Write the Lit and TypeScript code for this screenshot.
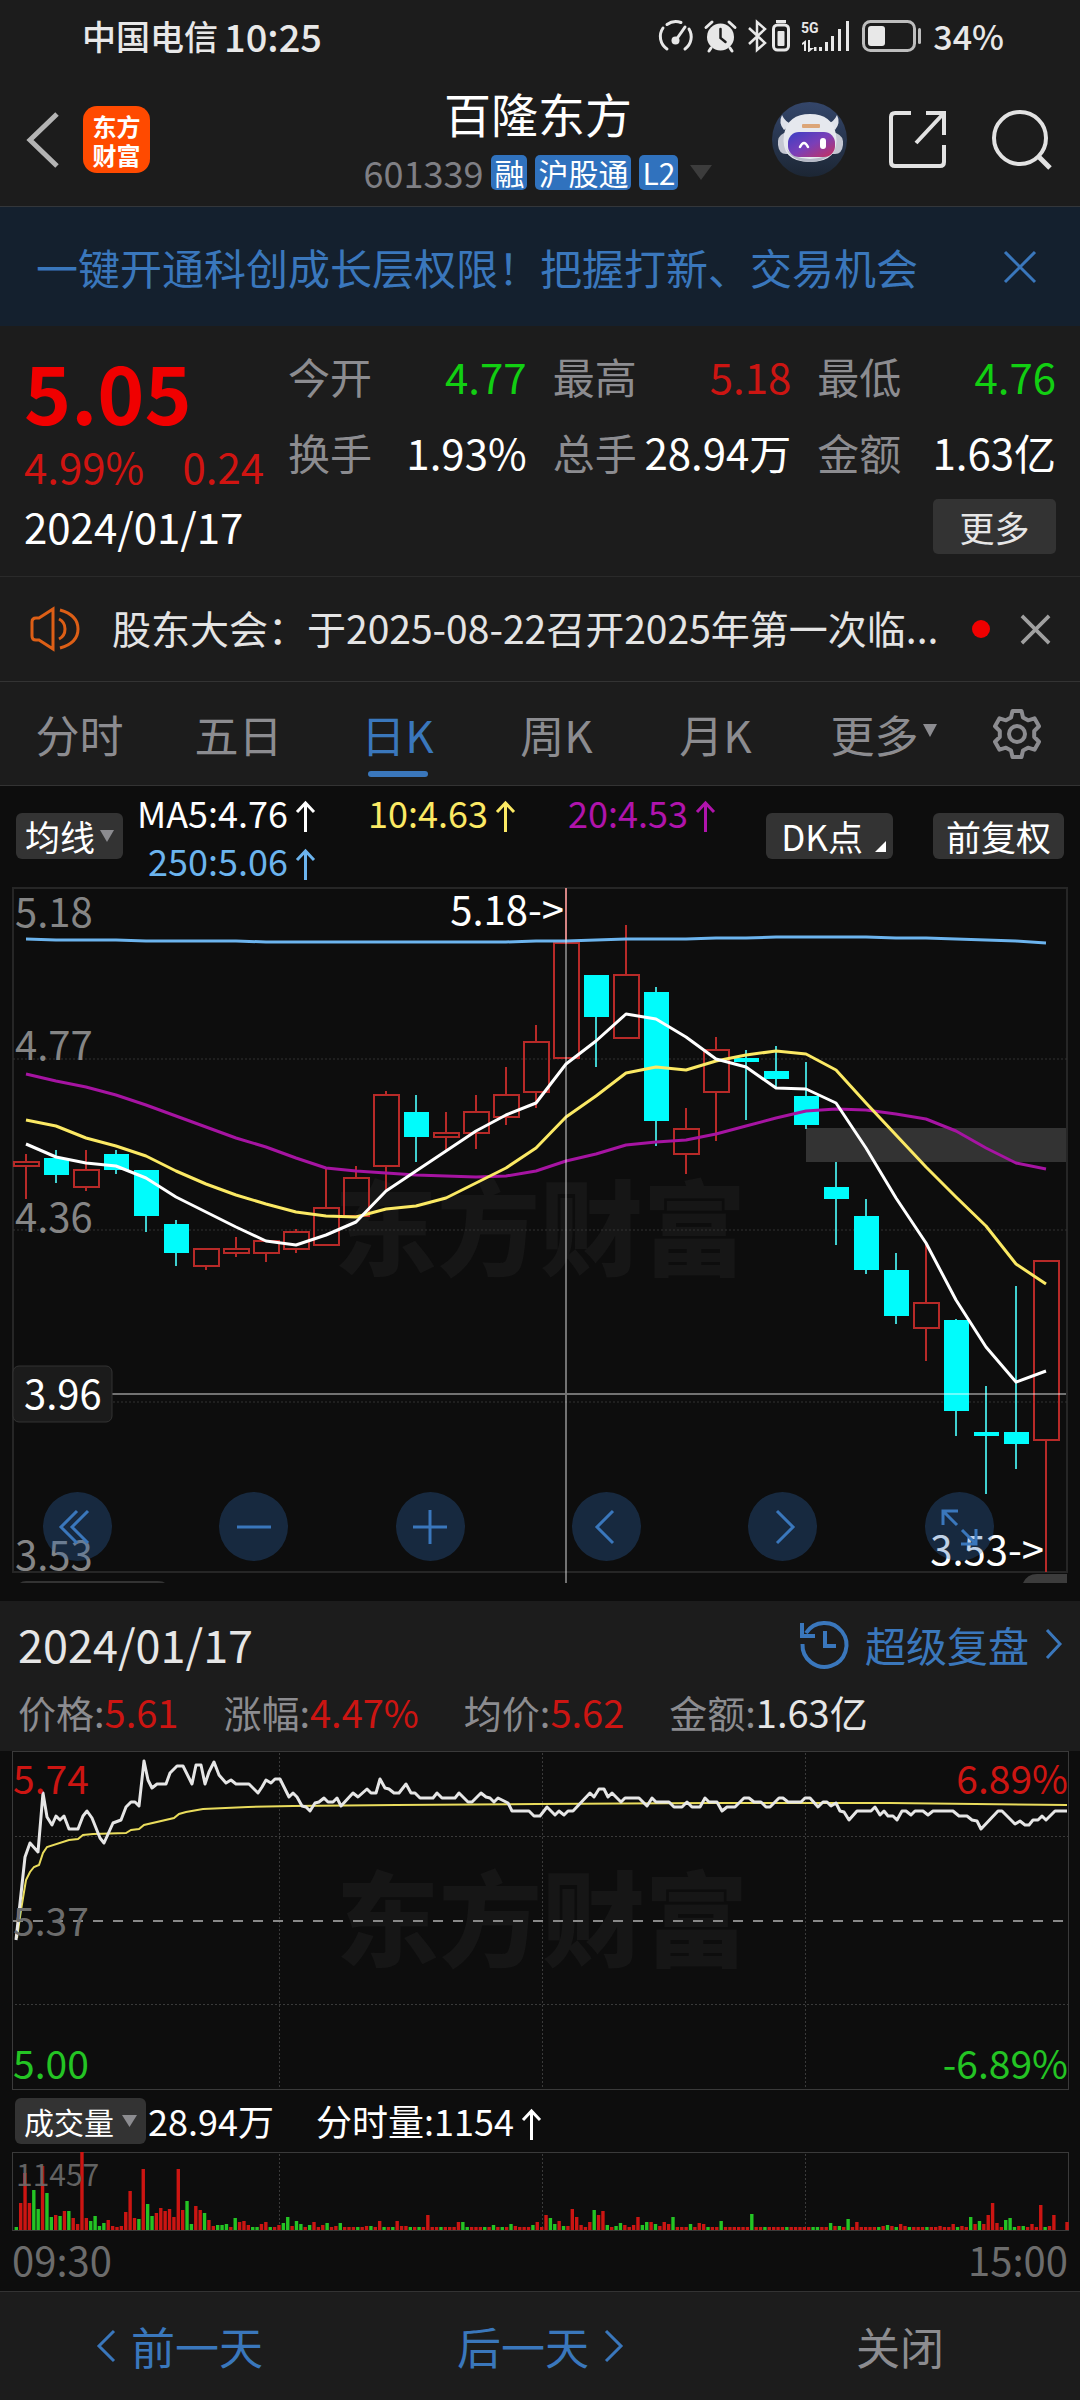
import { LitElement, html, svg, css } from "lit";
import { customElement, state } from "lit/decorators.js";
import { classMap } from "lit/directives/class-map.js";

const base = css`
  :host {
    display: block;
    font-family: "Noto Sans CJK SC", sans-serif;
  }
  * {
    box-sizing: border-box;
  }
  svg {
    display: block;
    flex: none;
    overflow: visible;
  }
  button,
  select {
    margin: 0;
    padding: 0;
    border: 0;
    background: none;
    font: inherit;
    color: inherit;
    line-height: inherit;
    appearance: none;
    cursor: pointer;
  }
  .arrow {
    display: inline-block;
    margin-left: 8px;
    vertical-align: -4px;
  }
`;

const upArrow = html`<svg
  class="arrow" role="img" aria-label="上升" width="19" height="31" viewBox="0 0 19 31"
  fill="none" stroke="currentColor" stroke-width="3"
>
  <path d="M1 11 9.500 2 18 11M9.500 2V31" />
</svg>`;

/* ---------- daily candles ---------- */

// direction, high, body top, body bottom, low (chart units)
type Candle = ["u" | "d", number, number, number, number];
const candles: Candle[] = [
  ["u", 274, 282, 286, 319], ["d", 270, 278, 295, 303], ["u", 270, 290, 307, 311],
  ["d", 270, 274, 290, 294], ["d", 290, 290, 336, 352], ["d", 340, 344, 373, 386],
  ["u", 369, 369, 386, 390], ["u", 357, 369, 373, 377], ["u", 361, 361, 373, 382],
  ["u", 349, 352, 369, 373], ["u", 287, 328, 365, 365], ["u", 286, 298, 336, 336],
  ["u", 211, 215, 286, 310], ["d", 215, 232, 257, 282], ["u", 232, 253, 257, 270],
  ["u", 215, 232, 253, 269], ["u", 187, 215, 237, 245], ["u", 145, 162, 212, 228],
  ["u", 8, 63, 178, 178], ["d", 95, 95, 137, 187], ["u", 45, 95, 158, 158],
  ["d", 107, 112, 241, 266], ["u", 228, 249, 274, 294], ["u", 157, 170, 212, 261],
  ["d", 170, 178, 182, 240], ["d", 166, 191, 199, 207], ["d", 182, 216, 245, 249],
  ["d", 282, 307, 319, 365], ["d", 319, 336, 390, 394], ["d", 373, 390, 436, 444],
  ["u", 363, 423, 448, 481], ["d", 439, 440, 531, 556], ["d", 506, 552, 556, 614],
  ["d", 406, 552, 564, 589], ["u", 381, 381, 560, 692],
];

const ma5 = [264, 277, 283, 286, 298, 317, 332, 347, 361, 365, 355, 342, 311, 291, 271, 251, 235, 223, 184, 161, 134, 139, 157, 179, 187, 208, 209, 223, 268, 318, 363, 420, 467, 502, 491];
const ma10 = [240, 246, 258, 266, 276, 291, 304, 315, 324, 332, 336, 337, 329, 326, 318, 303, 288, 268, 237, 216, 193, 187, 190, 181, 175, 171, 174, 190, 223, 255, 287, 317, 346, 384, 404];
const ma20 = [194, 201, 207, 215, 225, 236, 247, 258, 267, 278, 288, 291, 293, 295, 296, 297, 296, 291, 281, 274, 265, 262, 260, 254, 246, 238, 231, 229, 230, 234, 239, 251, 268, 283, 289];
const ma250 = [59, 60, 60, 60, 61, 61, 61, 61, 62, 62, 62, 62, 62, 62, 62, 62, 62, 61, 61, 60, 59, 59, 59, 58, 58, 57, 57, 57, 57, 58, 58, 59, 60, 61, 63];

const slotX = (i: number) => 26 + i * 30;
const series = (ys: number[]) => ys.map((y, i) => `${slotX(i)},${y}`).join(" ");

@customElement("k-line-chart")
class KLineChart extends LitElement {
  static styles = [
    base,
    css`
      :host {
        position: relative;
      }
      .plot {
        width: 100%;
        height: auto;
      }
      .frame {
        fill: none;
        stroke: #262626;
        stroke-width: 2;
      }
      .grid {
        stroke: #333;
        stroke-width: 1;
        stroke-dasharray: 2 2;
      }
      .axis {
        fill: #858585;
        font-size: 40px;
      }
      .mark {
        fill: #fff;
        font-size: 40px;
      }
      .watermark {
        fill: #161616;
        font-size: 103px;
        font-weight: 900;
      }
      .up {
        fill: none;
        stroke: #b72a28;
        stroke-width: 2;
      }
      .wick-down {
        stroke: #3fd0d0;
        stroke-width: 2;
      }
      .down {
        fill: #00fcfc;
      }
      .line {
        fill: none;
        stroke-width: 3;
        stroke-linejoin: round;
      }
      .cross {
        stroke: rgba(255, 255, 255, 0.42);
        stroke-width: 2;
      }
      .tools {
        position: absolute;
        left: 4%;
        right: 8%;
        bottom: 40px;
        display: flex;
        justify-content: space-between;
      }
      .tool {
        width: 69px;
        height: 69px;
        border-radius: 50%;
        background: rgba(48, 106, 177, 0.31);
        display: grid;
        place-items: center;
      }
      .tool svg {
        width: 40px;
        height: 40px;
        fill: none;
        stroke: #3a77bc;
        stroke-width: 3;
      }
    `,
  ];

  private tools = [
    { name: "更早", path: "M19 4 3 20l16 16M30 4 14 20l16 16" },
    { name: "缩小", path: "M3 20h34" },
    { name: "放大", path: "M3 20h34M20 3v34" },
    { name: "左移", path: "M26 4 10 20l16 16" },
    { name: "右移", path: "M14 4 30 20 14 36" },
    { name: "全屏", path: "M4 18V4h15M5 5l13 13M37 22v15H22M36 36 23 23" },
  ];

  private candle([dir, high, top, bottom, low]: Candle, i: number) {
    const x = slotX(i);
    if (dir === "d") {
      return svg`<path class="wick-down" d="M${x} ${high}V${low}" />
        <rect class="down" x=${x - 12} y=${top} width="25" height=${bottom - top} />`;
    }
    return svg`<path class="up" d="M${x} ${high}V${top}M${x} ${bottom}V${low}" />
      <rect class="up" x=${x - 12} y=${top} width="25" height=${bottom - top} />`;
  }

  render() {
    return html`
      <svg class="plot" viewBox="0 0 1080 721" role="img" aria-label="日K线图">
        <text class="watermark" x="334" y="388">东方财富</text>
        <rect class="frame" x="13" y="8" width="1054" height="684" />
        <path class="grid" d="M13 179H1067M13 350H1067M13 522H1067" />
        <rect x="806" y="248" width="260" height="34" fill="#333" />
        ${candles.map((c, i) => this.candle(c, i))}
        <polyline class="line" stroke="#6cb4ee" points=${series(ma250)} />
        <polyline class="line" stroke="#a614a2" points=${series(ma20)} />
        <polyline class="line" stroke="#fbe964" points=${series(ma10)} />
        <polyline class="line" stroke="#fff" points=${series(ma5)} />
        <text class="axis" x="15" y="47">5.18</text>
        <text class="axis" x="15" y="180">4.77</text>
        <text class="axis" x="15" y="352">4.36</text>
        <text class="axis" x="15" y="690">3.53</text>
        <text class="mark" x="564" y="45" text-anchor="end">5.18-&gt;</text>
        <text class="mark" x="1044" y="685" text-anchor="end">3.53-&gt;</text>
        <path d="M20 703q2-2 6-2H158q5 0 7 2z" fill="#333" />
        <path d="M1023 703q4-9 14-9h30v9z" fill="#3c3c3c" />
        <path class="cross" d="M112 514H1066M566 8V703" />
        <rect x="13" y="486" width="99" height="56" rx="6" fill="#1b1b1b" stroke="#333" />
        <text class="mark" x="24" y="529">3.96</text>
      </svg>
      <div class="tools">
        ${this.tools.map(
          (t) => html`<button class="tool" aria-label=${t.name}>
            <svg viewBox="0 0 40 40"><path d=${t.path} /></svg>
          </button>`
        )}
      </div>
    `;
  }
}

/* ---------- intraday line and volume ---------- */

const price =
  "16,189 25,106 30,92 38,101 43,42 47,66 52,74 56,65 60,69 64,65 69,78 78,78 83,65 87,60 92,67 100,87 104,92 113,72 121,69 126,56 131,51 135,51 139,55 144,10 148,29 152,37 157,33 166,33 170,22 177,15 183,15 192,33 196,14 201,14 205,33 209,21 214,11 219,24 226,32 231,29 236,33 249,33 258,42 262,36 266,29 271,32 275,28 280,28 289,46 293,42 297,46 302,55 306,56 310,60 315,52 319,51 324,47 328,51 333,51 337,47 341,55 353,42 358,46 367,38 371,42 376,42 380,28 385,37 389,38 394,42 399,42 406,33 411,42 415,42 420,47 433,47 437,42 442,47 455,47 459,42 468,51 472,51 481,42 486,46 490,47 494,51 498,47 508,52 512,60 529,60 534,65 540,65 547,56 555,64 559,60 564,64 568,60 573,60 590,42 594,46 599,38 604,38 608,46 612,42 621,51 625,47 639,47 647,55 652,47 656,51 669,51 674,56 682,56 687,51 692,56 700,56 705,47 709,51 717,51 722,60 727,56 735,56 744,47 749,47 754,51 761,51 766,56 770,56 779,47 783,47 788,51 801,51 805,47 810,47 818,56 823,51 827,51 831,55 836,52 840,60 844,61 849,69 857,60 871,60 875,56 880,64 884,60 888,65 893,65 897,69 902,60 906,60 911,64 915,60 923,60 928,64 933,60 953,60 959,65 967,65 972,69 977,70 981,78 998,60 1002,60 1015,73 1020,70 1025,74 1029,74 1033,69 1038,69 1042,65 1046,69 1055,60 1067,60";
const average =
  "17,187 21,159 26,129 30,121 34,116 39,114 43,102 47,96 69,89 78,88 83,84 93,83 126,82 131,79 139,78 144,74 174,67 179,63 186,61 203,58 248,56 293,55 396,54 537,53 712,52 890,52 1067,54";

// One entry per minute: r/g for colour, height, optional *repeat
const volume = (
  "g3 r27 r57 r27 g40 g21 r64 g37 g13 r15 g14 r19 g19 r12 r6 r78 r12 g9 g14 g4 g7 r10 r4 r3 r4 r18 r39 r12 g11 r61 g26 g14 r17 r22 r19 r21 r13 r61 r20 g29 " +
  "g6 r24 r20 g17 r10 r4 g5*2 g6 r3 g12 r8 r9 r5 g3*2 r6 r8 g3 r3 r5 g7 g13 r4 g9 g6 r3 g5 r8 r3 r5 g7 r3 r4 g7 r3*3 g3 r3 " +
  "r4 g4 r3 r9 g3 r3 g3 r9 r4*2 g3 r3 g3 r3 r15 r3*2 g3 r3*3 r8 g8 g3 r3*3 g3 r3 g5 r3 g3 r3 g6 r4 r3*3 g5 r8 " +
  "r3 r15 g12 g6 r9 g4 r4 r21 r13 r5 r3 r8 g20 r15 r19 g5 r3 g4 g7 r5 r3 r5 r13 g5 g8 r8 g6 r4 r8 r6 g13 r3*3 g6 r3 r7 r6 g3 r3 " +
  "r3 g9 r3*6 g16 r3*2 g3 r3*4 g3 r3*5 g3*2 r3*2 g7 r4 g4 r3 g11 r3 r8 r3*4 g3 r4 g5 r4 g3 r6 r4 g3 r3*3 g3 r3*2 r4 r3*2 r6 g3 r4 r3 " +
  "g13 r6 g9 r6 r15 r27 r7 r3 g10 g12 g3 r4 g4 r3 r6 r3 r25 g3 r4 r15 r0*2 r8"
)
  .split(" ")
  .flatMap((token) => {
    const [bar, times] = token.split("*");
    return Array.from({ length: Number(times ?? 1) }, () => ({
      up: bar[0] === "r",
      size: Number(bar.slice(1)),
    }));
  });

@customElement("minute-chart")
class MinuteChart extends LitElement {
  static styles = [
    base,
    css`
      .plot {
        width: 100%;
        height: auto;
      }
      .frame {
        fill: none;
        stroke: #3a3a3a;
        stroke-width: 1;
      }
      .grid {
        stroke: #3a3a3a;
        stroke-width: 1;
        stroke-dasharray: 2 2;
      }
      .middle {
        stroke: #888;
        stroke-width: 2;
        stroke-dasharray: 10 10;
      }
      .label {
        font-size: 39px;
      }
      .small {
        font-size: 30px;
      }
      .rise {
        fill: #cc1512;
      }
      .fall {
        fill: #24c424;
      }
      .muted {
        fill: #6c6c6c;
      }
      .watermark {
        fill: #161616;
        font-size: 103px;
        font-weight: 900;
      }
      .price {
        fill: none;
        stroke: #e6e6e6;
        stroke-width: 3;
        stroke-linejoin: round;
      }
      .average {
        fill: none;
        stroke: #e9dc5c;
        stroke-width: 2;
      }
      .legend {
        display: flex;
        align-items: center;
        height: 62px;
        padding: 0 15px;
        font-size: 36px;
        line-height: 46px;
        color: #fff;
      }
      .legend > span {
        margin-left: 2px;
        padding-bottom: 2px;
      }
      .legend > .current {
        margin-left: 42px;
      }
      .picker {
        display: flex;
        align-items: center;
        gap: 8px;
        height: 46px;
        padding: 0 9px;
        border-radius: 6px;
        background: #333;
        font-size: 30px;
      }
      .times {
        display: flex;
        justify-content: space-between;
        padding: 0 12px 3px;
        font-size: 40px;
        line-height: 57px;
        color: #6c6c6c;
      }
    `,
  ];

  render() {
    return html`
      <svg class="plot" viewBox="0 0 1080 339" role="img" aria-label="分时图">
        <text class="watermark" x="336" y="208">东方财富</text>
        <rect class="frame" x="12.5" y="0.5" width="1056" height="338" />
        <path class="grid" d="M15 85.5H1068M15 253.5H1068M279.5 2V338M542.5 2V338M805.5 2V338" />
        <path class="middle" d="M13 170H1068" />
        <polyline class="average" points=${average} />
        <polyline class="price" points=${price} />
        <text class="label rise" x="13" y="43">5.74</text>
        <text class="label muted" x="13" y="185">5.37</text>
        <text class="label fall" x="13" y="328">5.00</text>
        <text class="label rise" x="1068" y="43" text-anchor="end">6.89%</text>
        <text class="label fall" x="1068" y="328" text-anchor="end">-6.89%</text>
      </svg>
      <div class="legend">
        <label class="picker">
          <select aria-label="指标">
            <option>成交量</option>
          </select>
          <svg width="15" height="12" viewBox="0 0 15 12"><path d="M0 0h15L7.500 12z" fill="#8c8c90" /></svg>
        </label>
        <span>28.94万</span>
        <span class="current">分时量:1154${upArrow}</span>
      </div>
      <svg class="plot" viewBox="0 0 1080 79" role="img" aria-label="成交量">
        <path class="grid" d="M279.5 2V78M542.5 2V78M805.5 2V78" />
        <rect class="frame" x="12.500" y="0.5" width="1056" height="78" />
        ${volume.map(
          (bar, i) => svg`<rect class=${bar.up ? "rise" : "fall"} x=${14.6 + i * 4.378}
            y=${78 - bar.size} width="3.4" height=${bar.size} />`
        )}
        <text class="small muted" x="16" y="34" opacity="0.9">11457</text>
      </svg>
      <div class="times"><span>09:30</span><span>15:00</span></div>
    `;
  }
}

/* ---------- page ---------- */

@customElement("app-root")
class AppRoot extends LitElement {
  @state() private tab = "日K";

  static styles = [
    base,
    css`
      :host {
        background: #1c1c1c;
        color: #fff;
        min-height: 100vh;
      }
      .status {
        display: flex;
        align-items: center;
        height: 74px;
        padding: 0 76px 3px 82px;
        font-size: 34px;
        color: #e8e8e8;
      }
      .clock {
        margin-left: 6px;
        margin-right: auto;
        font-size: 38px;
        font-weight: 500;
      }
      .carrier,
      .level {
        font-weight: 500;
      }
      .status svg {
        margin-right: 11px;
      }
      .status .tight {
        margin-right: 5px;
      }
      .header {
        display: grid;
        grid-template-columns: 1fr auto 1fr;
        height: 133px;
        padding: 0 28px 0 24px;
        border-bottom: 1px solid #33363a;
      }
      .brand,
      .actions {
        display: flex;
        align-items: center;
        height: 131px;
      }
      .brand {
        gap: 22px;
      }
      .logo {
        display: grid;
        place-content: center;
        width: 67px;
        height: 67px;
        border-radius: 14px;
        background: #ff4a00;
        color: #fff;
        font-size: 24px;
        font-weight: 700;
        line-height: 29px;
        text-decoration: none;
      }
      .logo span {
        display: block;
      }
      .actions {
        justify-content: flex-end;
        gap: 41px;
      }
      .actions button:last-child {
        margin-left: 4px;
      }
      .title {
        text-align: center;
      }
      h1 {
        margin: 0;
        padding-top: 9px;
        font-size: 47px;
        font-weight: 400;
        line-height: 60px;
      }
      .code {
        display: flex;
        align-items: center;
        justify-content: center;
        gap: 8px;
        margin-top: 8px;
        font-size: 36px;
        line-height: 42px;
        color: #7f7f84;
      }
      .tag {
        padding: 0 3px;
        border-radius: 5px;
        background: #3072be;
        color: #fff;
        font-size: 30px;
        line-height: 35px;
      }
      .code svg {
        margin-left: 4px;
      }
      .banner {
        display: flex;
        align-items: center;
        justify-content: space-between;
        height: 119px;
        padding: 0 44px 0 36px;
        background: #14202e;
        font-size: 42px;
      }
      .banner a {
        color: #3a77bc;
        text-decoration: none;
      }
      .quote {
        display: grid;
        grid-template-columns: 240px 1fr;
        gap: 6px 24px;
        height: 251px;
        padding: 12px 24px 22px;
        border-bottom: 1px solid #2a2a2a;
        font-size: 42px;
      }
      .last {
        color: #f00000;
        font-size: 80px;
        font-weight: 700;
        line-height: 104px;
      }
      .change {
        display: flex;
        justify-content: space-between;
        color: #d01411;
        line-height: 48px;
      }
      .facts {
        display: grid;
        grid-template-columns: repeat(3, 1fr);
        column-gap: 26px;
        margin: 0;
        line-height: 75px;
      }
      .fact {
        display: flex;
        justify-content: space-between;
        white-space: nowrap;
      }
      dt {
        color: #8c8c90;
      }
      dd {
        margin: 0;
      }
      .rise {
        color: #cc1512;
      }
      .fall {
        color: #12cf12;
      }
      .day {
        grid-column: 1 / -1;
        display: flex;
        align-items: center;
        justify-content: space-between;
        line-height: 60px;
      }
      .more {
        width: 123px;
        height: 55px;
        border-radius: 5px;
        background: #333;
        color: #e6e6e6;
        font-size: 35px;
        line-height: 55px;
      }
      .news {
        display: flex;
        align-items: center;
        height: 105px;
        padding: 0 30px;
        border-bottom: 1px solid #333;
        color: #e4e4e4;
        font-size: 39px;
      }
      .headline {
        flex: 1;
        margin-left: 31px;
        padding-bottom: 4px;
        overflow: hidden;
        white-space: nowrap;
      }
      .dot {
        width: 18px;
        height: 18px;
        margin-right: 31px;
        border-radius: 50%;
        background: #f00000;
      }
      .tabs {
        display: grid;
        grid-template-columns: repeat(6, 53fr) 42fr;
        height: 104px;
        border-bottom: 1px solid #333;
        font-size: 44px;
        color: #8c8c90;
      }
      .tab {
        position: relative;
        display: flex;
        align-items: center;
        justify-content: center;
      }
      .tab.active {
        color: #3a77bc;
      }
      .tab.active::after {
        content: "";
        position: absolute;
        bottom: 8px;
        left: 50%;
        width: 60px;
        height: 6px;
        margin-left: -30px;
        border-radius: 3px;
        background: #3a77bc;
      }
      .tab svg {
        margin: 0 -18px 6px 4px;
      }
      .gear {
        display: grid;
        place-items: center;
      }
      .dark {
        background: #0d0d0d;
      }
      .toolbar {
        display: flex;
        align-items: center;
        height: 94px;
        padding: 6px 16px 0;
        font-size: 35px;
      }
      .chip {
        display: flex;
        align-items: center;
        gap: 4px;
        height: 46px;
        padding: 0 9px;
        border-radius: 6px;
        background: #333;
        line-height: 46px;
      }
      .averages {
        display: grid;
        grid-template-columns: 192px 200px 200px;
        margin-right: auto;
        text-align: right;
        font-size: 36px;
        line-height: 48px;
      }
      .ma5 {
        color: #fff;
      }
      .ma10 {
        color: #fbe964;
      }
      .ma20 {
        color: #b014ac;
      }
      .ma250 {
        color: #6cb4ee;
      }
      .dk {
        margin-right: 40px;
        padding: 0 7px 0 15px;
        gap: 12px;
      }
      .dk svg {
        align-self: flex-end;
        margin-bottom: 7px;
      }
      .adjust {
        padding: 0 13px;
      }
      .replay {
        height: 150px;
        padding: 13px 18px 0 18px;
      }
      .replay-top {
        display: flex;
        align-items: center;
        justify-content: space-between;
        color: #e6e6e6;
        font-size: 45px;
        line-height: 60px;
      }
      .replay-link {
        display: flex;
        align-items: center;
        gap: 16px;
        color: #3a77bc;
        font-size: 41px;
        text-decoration: none;
      }
      .replay-stats {
        display: flex;
        gap: 45px;
        padding-top: 8px;
        color: #8c8c90;
        font-size: 38px;
        line-height: 60px;
      }
      .plain {
        color: #e6e6e6;
      }
      .footer {
        display: grid;
        grid-template-columns: repeat(3, 1fr);
        height: 109px;
        border-top: 1px solid #333;
        color: #3a77bc;
        font-size: 44px;
      }
      .footer button {
        display: flex;
        align-items: center;
        justify-content: center;
        gap: 15px;
      }
      .footer .close {
        color: #8c8c90;
      }
    `,
  ];

  private cross(color: string, size: number, width: number) {
    return html`<svg width=${size} height=${size} viewBox="0 0 32 32" fill="none" stroke=${color} stroke-width=${width}>
      <path d="M1 1 31 31M31 1 1 31" />
    </svg>`;
  }

  private statusBar() {
    return html`
      <div class="status">
        <span class="carrier">中国电信</span><span class="clock">10:25</span>
        <svg width="34" height="32" viewBox="0 0 34 32" fill="none" stroke="#e8e8e8" stroke-width="3" stroke-linecap="round">
          <path d="M8 29A15 15 0 0 1 4 8M8 4.500A15 15 0 0 1 22 2.500M30 9a15 15 0 0 1-4 20" />
          <path d="M17 20 26 7" /><circle cx="16.500" cy="20.500" r="4" fill="#e8e8e8" stroke="none" />
        </svg>
        <svg width="33" height="32" viewBox="0 0 33 32" fill="none" stroke="#e8e8e8" stroke-width="3" stroke-linecap="round">
          <circle cx="16.500" cy="17" r="13.500" fill="#e8e8e8" stroke="none" />
          <path d="M2 7.500 8 2M31 7.500 25 2M7 28l-2 3M26 28l2 3" />
          <path d="M16.500 9v9l5 4" stroke="#1c1c1c" stroke-width="2.500" />
        </svg>
        <svg class="tight" width="19" height="32" viewBox="0 0 19 32" fill="none" stroke="#e8e8e8" stroke-width="2.500">
          <path d="M1 8 17 23l-8 7V2l8 7L1 24" />
        </svg>
        <svg width="18" height="32" viewBox="0 0 18 32">
          <rect x="4" width="10" height="3" fill="#e8e8e8" />
          <rect x="1.500" y="5" width="15" height="25" rx="4" fill="none" stroke="#e8e8e8" stroke-width="3" />
          <rect x="5.500" y="11" width="7" height="15" rx="1" fill="#e8e8e8" />
        </svg>
        <svg width="50" height="32" viewBox="0 0 50 32" fill="#e8e8e8">
          <text x="0" y="13" font-size="14" font-weight="700" font-family="Roboto, sans-serif">5G</text>
          <path d="M1 23l4-3v11H3v-7l-2 1zM7 20h2v8h4l-5 4H7zM13 27h2.500v4H13z" />
          <path d="M18 27h3v4h-3zM24 22h3v9h-3zM30 16h3v15h-3zM37 9h3v22h-3zM45 1h3v30h-3z" />
        </svg>
        <svg width="60" height="32" viewBox="0 0 60 32">
          <rect x="1.500" y="1.500" width="51" height="29" rx="7" fill="none" stroke="#bdbdbd" stroke-width="3" />
          <rect x="6" y="6" width="17" height="20" rx="3" fill="#e8e8e8" />
          <rect x="56" y="8" width="3" height="16" rx="1.500" fill="#bdbdbd" />
        </svg>
        <span class="level">34%</span>
      </div>
    `;
  }

  private header() {
    return html`
      <header class="header">
        <div class="brand">
          <button aria-label="返回">
            <svg width="37" height="58" viewBox="0 0 37 58" fill="none" stroke="#b4b4b4" stroke-width="5">
              <path d="M33 3 6 29l27 26" />
            </svg>
          </button>
          <a class="logo" href="#"><span>东方</span><span>财富</span></a>
        </div>
        <div class="title">
          <h1>百隆东方</h1>
          <div class="code">
            <span>601339</span><span class="tag">融</span><span class="tag">沪股通</span><span class="tag">L2</span>
            <svg width="22" height="15" viewBox="0 0 22 15"><path d="M0 0h22L11 15z" fill="#3c3c3c" /></svg>
          </div>
        </div>
        <div class="actions">
          <button aria-label="智能助手">
            <svg width="75" height="75" viewBox="0 0 75 75">
              <defs>
                <linearGradient id="disc" x1="0" y1="0" x2="0" y2="1">
                  <stop offset="0" stop-color="#34466a" />
                  <stop offset="1" stop-color="#1c2634" />
                </linearGradient>
                <linearGradient id="visor" x1="0" y1="0" x2="1" y2="1">
                  <stop offset="0" stop-color="#3b3fc4" />
                  <stop offset="0.500" stop-color="#7a3fb8" />
                  <stop offset="1" stop-color="#c8305c" />
                </linearGradient>
              </defs>
              <circle cx="37.500" cy="37.500" r="37.500" fill="url(#disc)" />
              <path d="M10 13q-4 8 2 15l8-6q-7-2-10-9zM65 13q4 8-2 15l-8-6q7-2 10-9z" fill="#dfe2ea" />
              <path d="M6 43q-1-9 6-12h52q8 3 7 12-1 9-8 9H14q-7 0-8-9z" fill="#c4c7d2" />
              <path d="M38 12q22 0 26 20 4 28-26 28T12 32q4-20 26-20z" fill="#e6e8ee" />
              <path d="M14 46q5 13 24 14 19-1 25-14-6 10-25 11-19-1-24-11z" fill="#b4b8c6" />
              <rect x="16" y="30" width="47" height="25" rx="11" fill="url(#visor)" />
              <rect x="30" y="22" width="18" height="4" rx="1" fill="#dca578" />
              <path d="M28 45q4-8 8 0" fill="none" stroke="#fff" stroke-width="2.500" stroke-linecap="round" />
              <rect x="48" y="36" width="6" height="11" rx="3" fill="#fff" />
            </svg>
          </button>
          <button aria-label="分享">
            <svg width="59" height="59" viewBox="0 0 59 59" fill="none" stroke="#e2e2e2" stroke-width="4">
              <path d="M23 3H7q-4 0-4 4v45q0 4 4 4h45q4 0 4-4V35" />
              <path d="M38 3h18v22M56 3 28 33" />
            </svg>
          </button>
          <button aria-label="搜索">
            <svg width="60" height="60" viewBox="0 0 60 60" fill="none" stroke="#e2e2e2" stroke-width="4">
              <circle cx="28" cy="28" r="26" /><path d="M46 46 58 58" stroke-width="5" />
            </svg>
          </button>
        </div>
      </header>
    `;
  }

  private fact(label: string, value: string, tone = "") {
    return html`<div class="fact"><dt>${label}</dt><dd class=${tone}>${value}</dd></div>`;
  }

  private quote() {
    return html`
      <section class="quote">
        <div>
          <div class="last">5.05</div>
          <div class="change"><span>4.99%</span><span>0.24</span></div>
        </div>
        <dl class="facts">
          ${this.fact("今开", "4.77", "fall")} ${this.fact("最高", "5.18", "rise")}
          ${this.fact("最低", "4.76", "fall")} ${this.fact("换手", "1.93%")}
          ${this.fact("总手", "28.94万")} ${this.fact("金额", "1.63亿")}
        </dl>
        <div class="day"><span>2024/01/17</span><button class="more">更多</button></div>
      </section>
    `;
  }

  private tabs() {
    return html`
      <nav class="tabs" role="tablist">
        ${["分时", "五日", "日K", "周K", "月K", "更多"].map(
          (name) => html`<button
            class=${classMap({ tab: true, active: this.tab === name })}
            role="tab"
            aria-selected=${this.tab === name ? "true" : "false"}
            @click=${() => (this.tab = name)}
          >
            ${name}${name === "更多"
              ? html`<svg width="14" height="13" viewBox="0 0 14 13"><path d="M0 0h14L7 13z" fill="#8c8c90" /></svg>`
              : ""}
          </button>`
        )}
        <button class="gear" aria-label="设置">
          <svg width="52" height="52" viewBox="0 0 52 52" fill="none" stroke="#8c8c90" stroke-width="4" stroke-linejoin="round">
            <path d="M21.500 3h9l1.500 6.500 5 2.800 6.500-2 4.500 8-4.800 4.700v6l4.800 4.700-4.500 8-6.500-2-5 2.800L30.500 49h-9L20 42.500l-5-2.800-6.500 2-4.500-8L8.800 29v-6L4 18.300l4.500-8 6.500 2 5-2.800z" />
            <circle cx="26" cy="26" r="8" />
          </svg>
        </button>
      </nav>
    `;
  }

  private toolbar() {
    return html`
      <div class="toolbar">
        <label class="chip">
          <select aria-label="主图指标">
            <option>均线</option>
          </select>
          <svg width="14" height="12" viewBox="0 0 14 12"><path d="M0 0h14L7 12z" fill="#8c8c90" /></svg>
        </label>
        <div class="averages">
          <span class="ma5">MA5:4.76${upArrow}</span>
          <span class="ma10">10:4.63${upArrow}</span>
          <span class="ma20">20:4.53${upArrow}</span>
          <span class="ma250">250:5.06${upArrow}</span>
        </div>
        <button class="chip dk">
          DK点<svg width="11" height="11" viewBox="0 0 11 11"><path d="M11 0v11H0z" fill="#fff" /></svg>
        </button>
        <button class="chip adjust">前复权</button>
      </div>
    `;
  }

  render() {
    return html`
      ${this.statusBar()} ${this.header()}
      <div class="banner">
        <a href="#">一键开通科创成长层权限！把握打新、交易机会</a>
        <button aria-label="关闭横幅">${this.cross("#3a77bc", 32, 3)}</button>
      </div>
      ${this.quote()}
      <div class="news">
        <svg width="51" height="44" viewBox="0 0 51 44" fill="none" stroke="#dd5f16" stroke-width="3">
          <path d="M9 11H6q-4 0-4 4v14q0 4 4 4h3l14 9V2L9 11z" />
          <path d="M29 12q6 3 6 10t-6 10M30 3q18 5 18 19T30 41" />
        </svg>
        <span class="headline">股东大会：于2025-08-22召开2025年第一次临...</span>
        <span class="dot"></span>
        <button aria-label="关闭公告">${this.cross("#a0a0a0", 29, 4)}</button>
      </div>
      ${this.tabs()}
      <section class="dark">${this.toolbar()}<k-line-chart></k-line-chart></section>
      <section class="replay">
        <div class="replay-top">
          <span>2024/01/17</span>
          <a class="replay-link" href="#">
            <svg width="49" height="49" viewBox="0 0 49 49" fill="none" stroke="#3a77bc" stroke-width="4">
              <path d="M6 13A22 22 0 1 1 2.500 24" /><path d="M2 3v13h13" /><path d="M25 11v15h11" />
            </svg>
            <span>超级复盘</span>
            <svg width="17" height="30" viewBox="0 0 17 30" fill="none" stroke="#3a77bc" stroke-width="3">
              <path d="M2 1 15 15 2 29" />
            </svg>
          </a>
        </div>
        <div class="replay-stats">
          <span>价格:<span class="rise">5.61</span></span>
          <span>涨幅:<span class="rise">4.47%</span></span>
          <span>均价:<span class="rise">5.62</span></span>
          <span>金额:<span class="plain">1.63亿</span></span>
        </div>
      </section>
      <section class="dark"><minute-chart></minute-chart></section>
      <footer class="footer">
        <button>
          <svg width="19" height="32" viewBox="0 0 19 32" fill="none" stroke="#3a77bc" stroke-width="3"><path d="M17 1 2 16l15 15" /></svg>
          前一天
        </button>
        <button>
          后一天
          <svg width="19" height="32" viewBox="0 0 19 32" fill="none" stroke="#3a77bc" stroke-width="3"><path d="M2 1 17 16 2 31" /></svg>
        </button>
        <button class="close">关闭</button>
      </footer>
    `;
  }
}
